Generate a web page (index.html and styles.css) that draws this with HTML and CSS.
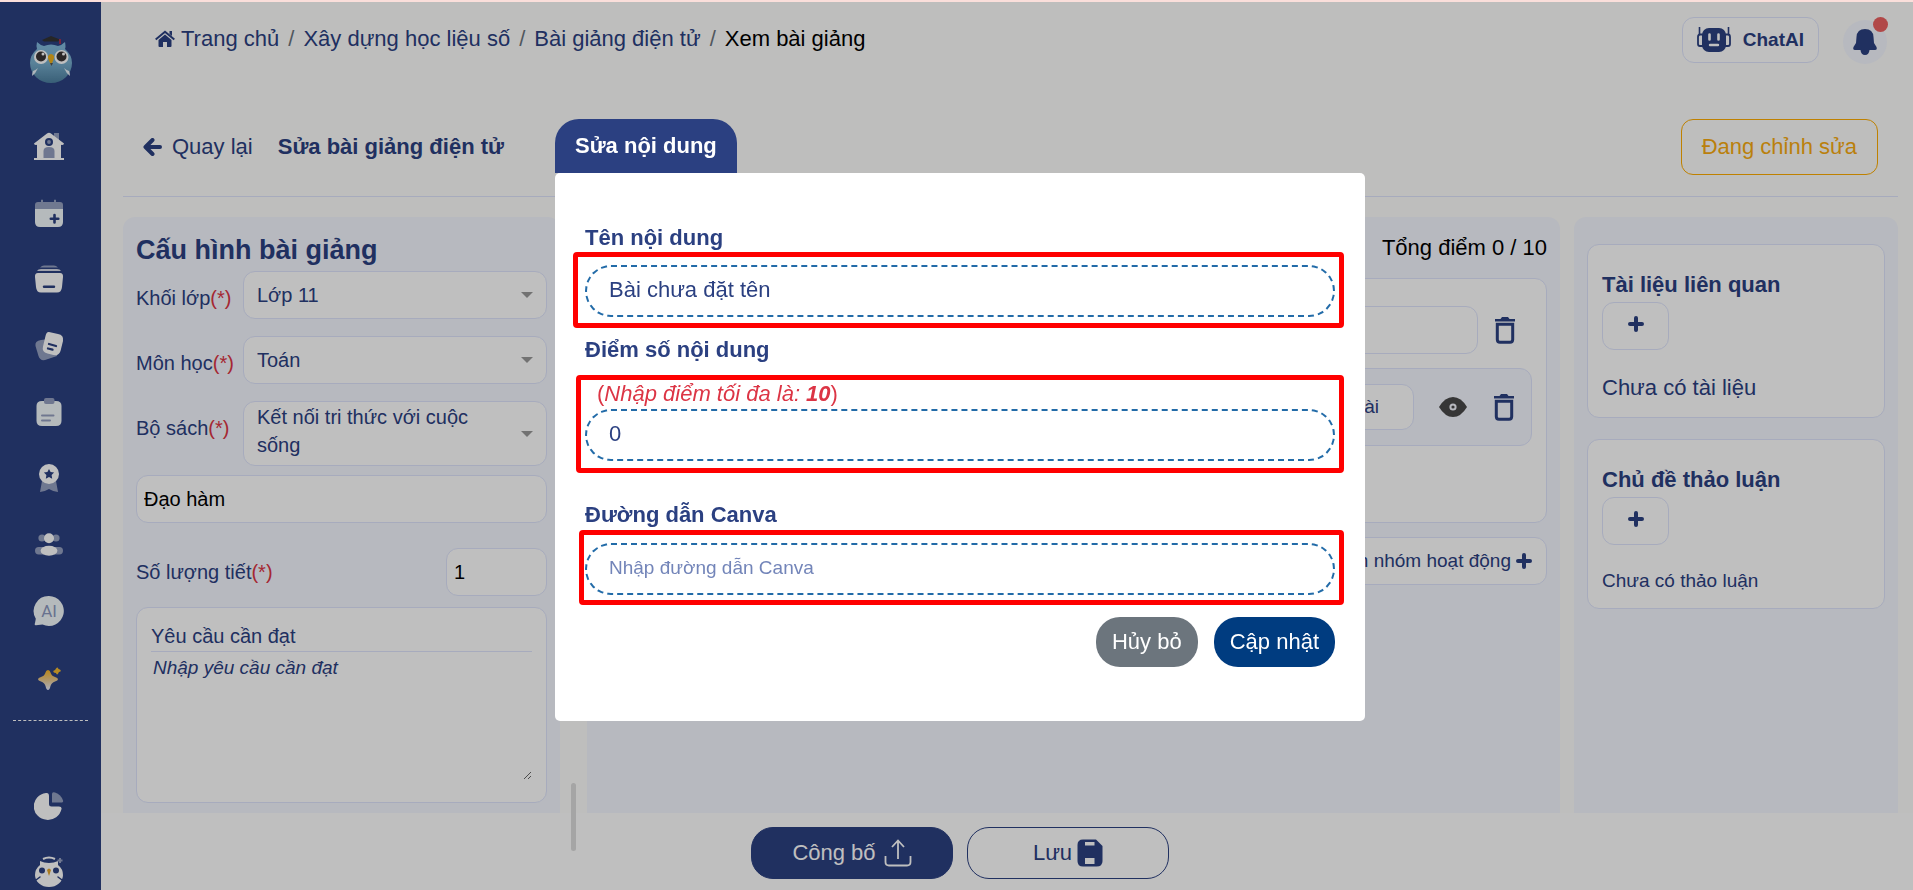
FILE: index.html
```html
<!DOCTYPE html>
<html lang="vi">
<head>
<meta charset="utf-8">
<meta name="viewport" content="width=device-width, initial-scale=1">
<title>Sửa bài giảng điện tử</title>
<link rel="stylesheet" href="styles.css">
</head>
<body>
<svg class="sprite" aria-hidden="true">
  <symbol id="trash" viewBox="0 0 22 28"><path d="M1 3h5.500l1.500-2h6l1.500 2H21v2.500H1z" fill="currentColor"/><path d="M3.300 8.300h15.400v15.200q0 2.700-2.700 2.700H6q-2.700 0-2.700-2.700z" fill="none" stroke="currentColor" stroke-width="3"/></symbol>
  <symbol id="plus" viewBox="0 0 16 16"><path d="M8 2v12M2 8h12" stroke="currentColor" stroke-width="4" stroke-linecap="round"/></symbol>
</svg>
<div class="app">
  <nav class="sidebar" aria-label="Điều hướng">
    <a class="logo" href="#" aria-label="Trang chính">
      <svg width="42" height="48" viewBox="0 0 42 48">
        <defs><linearGradient id="owl" x1="0" y1="0" x2="0" y2="1"><stop offset="0" stop-color="#83bbdf"/><stop offset=".5" stop-color="#78aecd"/><stop offset="1" stop-color="#4c7f9f"/></linearGradient></defs>
        <path d="M7 6q3 3 7 4 7-3 14 0 4-1 7-4 1 5 0 7 7 6 7 14a21 20 0 0 1-42 0q0-8 7-14-1-3 0-7z" fill="url(#owl)"/>
        <path d="M12 4l9-4 9 3.500-2 2H14z" fill="#333"/><path d="M30 3v5" stroke="#a03050" stroke-width="2"/>
        <circle cx="11" cy="21" r="7" fill="#fff"/><circle cx="31.500" cy="21" r="7" fill="#fff"/>
        <circle cx="11" cy="20.500" r="5" fill="#3a3434"/><circle cx="31.500" cy="20.500" r="5" fill="#3a3434"/>
        <circle cx="13" cy="18" r="1.500" fill="#fff"/><circle cx="33.500" cy="18" r="1.500" fill="#fff"/>
        <path d="M21 18q5 1 2 7l-2 4-2-4q-3-6 2-7z" fill="#eeb01b"/><path d="M20 27h3l-1.500 3z" fill="#555"/>
        <path d="M8 32q-2 5-6 8 0-3 1-5 3-1 5-3zM34 32q2 5 6 8 0-3-1-5-3-1-5-3z" fill="#e8f2fa"/>
      </svg>
    </a>
    <div class="nav-list">
      <a href="#" aria-label="Trang chủ"><svg width="32" height="32" viewBox="0 0 32 32"><path class="dim" d="M21 3h5v8h-5z"/><path d="M14 3.500q2-1.500 4 0L31 13.500q0 2-3 1.300V28h3v2H1v-2h3V14.800q-3 .7-3-1.300z"/><circle cx="16" cy="12" r="4" class="ink"/><circle cx="16" cy="12" r="1.900" class="soft"/><path class="soft" d="M10.500 28v-7q0-4 5.500-4t5.500 4v7z"/></svg></a>
      <a href="#" aria-label="Lịch"><svg width="30" height="30" viewBox="0 0 30 30"><path class="dim" d="M1 11V7q0-3 3-3h3V2q1-1 2 0v2h11V2q1-1 2 0v2h4q3 0 3 3v4z"/><path class="tint" d="M1 11h28v13q0 5-5 5H6q-5 0-5-5z"/><path class="line" stroke-width="2.600" d="M20.500 17v7.500M16.800 20.700h7.500"/></svg></a>
      <a href="#" aria-label="Kho học liệu"><svg width="30" height="30" viewBox="0 0 30 30"><path class="dim" d="M6 3.500Q8 1.500 10 1.500h10q2 0 4 2z"/><path d="M3 7q1-2 4-2h16q3 0 4 2z" opacity=".8"/><path d="M4 9h22q3.300 0 3 4l-1 10q-.5 5.500-5 5.500H7Q2.500 28.500 2 23L1 13q-.3-4 3-4z"/><path class="line" stroke-width="2.400" d="M10 22.800h10"/></svg></a>
      <a href="#" aria-label="Bài giảng"><svg width="30" height="30" viewBox="0 0 30 30"><path class="dim" d="M7 9l17-2-1 18-12 4q-5 1-6.500-4L1.500 15Q.5 10 7 9z"/><path d="M15 1l9 2q6 1 5 7l-2.500 10q-1.500 5-7 4l-6-1.500q-6-1.500-4.500-7L11.500 5Q12.500.5 15 1z"/><path class="line" stroke-width="2.300" d="M15 13l7 2M14 17.500l4.500 1.200"/></svg></a>
      <a href="#" aria-label="Bài kiểm tra"><svg width="30" height="30" viewBox="0 0 30 30"><path class="tint" d="M8 4h14q5.500 0 5.500 5v15q0 5-5.500 5H8q-5.500 0-5.500-5V9Q2.500 4 8 4z"/><rect class="soft" x="10" y="1" width="10.500" height="6" rx="2"/><path d="M8 18.500h11.500M8 23.500h8" fill="none" stroke="#959fc0" stroke-width="2" stroke-linecap="round"/></svg></a>
      <a href="#" aria-label="Thành tích"><svg width="30" height="30" viewBox="0 0 30 30"><path class="dim" d="M8 18h14l2 11q-4 0-9-3-5 3-9 3z"/><circle cx="15" cy="11" r="10"/><path class="ink" d="M15 6l1.600 3 3.500.6-2.500 2.500.6 3.600-3.200-1.600-3.200 1.600.6-3.600L9.900 9.600l3.500-.6z"/></svg></a>
      <a href="#" aria-label="Lớp học"><svg width="30" height="30" viewBox="0 0 30 30"><g class="dim"><circle cx="8" cy="8" r="3.600"/><circle cx="22" cy="8" r="3.600"/><rect x="1" y="17" width="12" height="7.500" rx="3.700"/><rect x="17" y="17" width="12" height="7.500" rx="3.700"/></g><circle cx="15" cy="8.300" r="5"/><ellipse cx="15" cy="20.800" rx="8.400" ry="5"/></svg></a>
      <a href="#" aria-label="AI"><svg width="32" height="32" viewBox="0 0 32 32"><path class="tint" d="M16 1a15 15 0 1 1-6.500 28.600L3 30.300Q1 30.500 2 28l.8-4.300A15 15 0 0 1 16 1z"/><text x="16" y="22" text-anchor="middle" class="ai">AI</text></svg></a>
      <a href="#" aria-label="Công cụ"><svg width="30" height="30" viewBox="0 0 30 30"><defs><linearGradient id="spark" x1="0" y1="0" x2="0" y2="1"><stop offset="0" stop-color="#f8b624"/><stop offset=".5" stop-color="#eac98d"/><stop offset="1" stop-color="#e5eaff"/></linearGradient></defs><path fill="url(#spark)" d="M14 7q2 0 2.500 2.500 1 3.500 4.500 4.500 3 1 3 2.200T21 18.500q-3.500 1-4.500 4.500-.8 4-2.500 4t-2.500-4q-1-3.500-4.500-4.500-3-1-3-2.300T7 14q3.500-1 4.500-4.500Q12 7 14 7z"/><path d="M23 4.500q1-.5 1.500 1.500 3 .7 2 2.500-2 .2-2.300 2-1.500 2-2.200-.5-3.500-.5-2.500-2.200 2-.3 2.300-2z" fill="#f3b92f"/></svg></a>
    </div>
    <div class="nav-rest">
      <a href="#" aria-label="Thống kê"><svg width="30" height="30" viewBox="0 0 30 30"><path class="dim" d="M18 11.500V3q0-2.500 3-1.500 6 2 8 8 .6 2-2 2z"/><path d="M15 5v8q0 2.500 2.500 2.500H25q3 0 2.500 2.500A14 13.500 0 1 1 12 2q3-.5 3 3z"/></svg></a>
      <a href="#" aria-label="Trợ lý cú"><svg width="30" height="32" viewBox="0 0 30 32"><path d="M6 5q4 2 9 2t9-2v4q5 4 5 10a14 12 0 0 1-28 0q0-6 5-10z"/><path d="M9 3q6-3 12 0" fill="none" stroke="#fff" stroke-width="2"/><circle class="ink" cx="8" cy="14.500" r="3"/><circle class="ink" cx="22" cy="14.500" r="3"/><path d="M13 14q2-3 4 0l-2 6z" fill="#e3a52b"/><path d="M26 2v5M23.500 4.500h5" stroke="#959fc0" stroke-width="2"/><path class="line" stroke-width="1.500" d="M2 24l4-3M28 24l-4-3"/></svg></a>
    </div>
  </nav>

  <div class="main">
    <header class="topbar">
      <ol class="crumbs">
        <li><a href="#"><svg width="20" height="18" viewBox="0 0 20 18"><path fill="currentColor" d="M10 4.500l6.500 5.500v6q0 1-1 1H12v-5H8v5H4.500q-1 0-1-1v-6z"/><path fill="none" stroke="currentColor" stroke-width="2" d="M.7 9.500L10 1.700l9.300 7.800"/><path fill="currentColor" d="M14.500 1H17v5l-2.500-2z"/></svg>Trang chủ</a></li>
        <li><a href="#">Xây dựng học liệu số</a></li>
        <li><a href="#">Bài giảng điện tử</a></li>
        <li aria-current="page">Xem bài giảng</li>
      </ol>
      <button class="chat" type="button"><svg width="34" height="26" viewBox="0 0 34 26"><rect x="5" y="1" width="24" height="24" rx="7" fill="currentColor"/><path d="M2.500 0v8M31.500 0v8" stroke="currentColor" stroke-width="1.600"/><path d="M6 7.500H3q-2 0-2 2.500v7q0 2 2 2h3M28 7.500h3q2 0 2 2.500v7q0 2-2 2h-3" fill="none" stroke="currentColor" stroke-width="1.800"/><path d="M12.500 7.500v5M21.500 7.500v5" stroke="#fff" stroke-width="2.600" stroke-linecap="round"/><path d="M13 18h8" stroke="#fff" stroke-width="2.400" stroke-linecap="round"/></svg>ChatAI</button>
      <button class="bell" type="button" aria-label="Thông báo"><svg width="26" height="28" viewBox="0 0 26 28"><path fill="currentColor" d="M13 1q8 0 8.500 8l.5 6 2.500 4q1 3-1.500 3h-5.500q-.5 5-4.500 5t-4.500-5H3q-2.500 0-1.500-3L4 15l.5-6Q5 1 13 1z"/></svg><span class="dot"></span></button>
    </header>

    <div class="titlebar">
      <a class="back" href="#"><svg width="19" height="18" viewBox="0 0 19 18"><path d="M9.500 2L2.500 9l7 7M3 9h14" fill="none" stroke="currentColor" stroke-width="4" stroke-linecap="round" stroke-linejoin="round"/></svg>Quay lại</a>
      <h1>Sửa bài giảng điện tử</h1>
      <button class="status" type="button">Đang chỉnh sửa</button>
    </div>

    <div class="workspace">
      <section class="panel config">
        <h2>Cấu hình bài giảng</h2>
        <div class="row"><label for="grade">Khối lớp<em>(*)</em></label><div class="pick"><select id="grade"><option>Lớp 11</option></select></div></div>
        <div class="row"><label for="subject">Môn học<em>(*)</em></label><div class="pick"><select id="subject"><option>Toán</option></select></div></div>
        <div class="row last"><label for="book">Bộ sách<em>(*)</em></label><div class="pick"><button id="book" type="button" aria-haspopup="listbox">Kết nối tri thức với cuộc sống</button></div></div>
        <input class="box" type="text" value="Đạo hàm" aria-label="Tên bài giảng">
        <div class="count"><label for="periods">Số lượng tiết<em>(*)</em></label><input class="box" id="periods" type="text" inputmode="numeric" value="1"></div>
        <div class="goal"><label for="goal">Yêu cầu cần đạt</label><textarea id="goal" placeholder="Nhập yêu cầu cần đạt"></textarea></div>
      </section>

      <section class="panel content">
        <p class="total">Tổng điểm 0 / 10</p>
        <div class="group">
          <div class="group-head"><input class="box" type="text" aria-label="Tên nhóm hoạt động"><button class="icon" type="button" aria-label="Xóa nhóm"><svg width="22" height="28"><use href="#trash"/></svg></button></div>
          <div class="lesson">
            <button class="edit" type="button">Sửa bài</button>
            <button class="icon eye" type="button" aria-label="Xem"><svg width="28" height="22" viewBox="0 0 28 22"><path fill="#484848" d="M0 11Q6 1 14 1t14 10q-6 10-14 10T0 11z"/><circle cx="14" cy="11" r="2.600" fill="none" stroke="#f5f6fe" stroke-width="2"/></svg></button>
            <button class="icon" type="button" aria-label="Xóa bài"><svg width="22" height="28"><use href="#trash"/></svg></button>
          </div>
        </div>
        <button class="add-group" type="button">Thêm nhóm hoạt động<svg width="16" height="16"><use href="#plus"/></svg></button>
      </section>

      <aside class="panel related">
        <section class="card"><h3>Tài liệu liên quan</h3><button class="add" type="button" aria-label="Thêm tài liệu"><svg width="16" height="16"><use href="#plus"/></svg></button><p>Chưa có tài liệu</p></section>
        <section class="card"><h3>Chủ đề thảo luận</h3><button class="add" type="button" aria-label="Thêm thảo luận"><svg width="16" height="16"><use href="#plus"/></svg></button><p class="small">Chưa có thảo luận</p></section>
      </aside>
      <span class="thumb"></span>
    </div>

    <footer class="actions">
      <button class="publish" type="button">Công bố<svg width="28" height="28" viewBox="0 0 28 28"><path d="M14 20V2M8 8l6-6.500L20 8M1.500 17v6q0 3.500 3.500 3.500h18q3.500 0 3.500-3.500v-6" fill="none" stroke="currentColor" stroke-width="1.800"/></svg></button>
      <button class="save" type="button">Lưu<svg width="26" height="28" viewBox="0 0 26 28"><path fill="currentColor" d="M6 .5h13L25.500 7v15q0 5.500-6 5.500H6Q.5 27.500.5 22V6Q.5.5 6 .5z"/><path d="M8 3h9.500v3.500H8zM8 19h9.500v6H8z" fill="#fff"/></svg></button>
    </footer>
  </div>
</div>

<div class="layer">
  <div class="modal" role="dialog" aria-modal="true" aria-labelledby="dlg">
    <h2 class="tab" id="dlg">Sửa nội dung</h2>
    <form class="sheet">
      <label for="name">Tên nội dung</label>
      <div class="field name"><input id="name" type="text" value="Bài chưa đặt tên"><span class="mark"></span></div>
      <label for="score">Điểm số nội dung</label>
      <div class="field score"><p>(<i>Nhập điểm tối đa là: <b>10</b></i>)</p><input id="score" type="text" inputmode="decimal" value="0"><span class="mark"></span></div>
      <label for="canva">Đường dẫn Canva</label>
      <div class="field canva"><input id="canva" type="text" placeholder="Nhập đường dẫn Canva"><span class="mark"></span></div>
      <div class="buttons"><button class="cancel" type="button">Hủy bỏ</button><button class="ok" type="button">Cập nhật</button></div>
    </form>
  </div>
</div>
</body>
</html>
```

FILE: styles.css
```css
:root {
  --blue: #2b4081;
  --line: #dfe5fd;
  --panel: #f5f7ff;
}
* { box-sizing: border-box; }
body {
  margin: 0;
  height: 100vh;
  overflow: hidden;
  border-top: 2px solid #fbdfdb;
  background: #fff;
  color: var(--blue);
  font: 22px/28px "Liberation Sans", Arial, sans-serif;
}
h1, h2, h3, p, ol { margin: 0; padding: 0; }
button, input, select, textarea { font: inherit; color: inherit; margin: 0; }
button { background: none; border: 0; padding: 0; cursor: pointer; }
a { color: inherit; text-decoration: none; }
em { color: #dc3545; font-style: normal; }
svg { display: block; flex: none; }
.sprite { position: absolute; width: 0; height: 0; }

.app { display: flex; height: 100%; }

/* Sidebar */
.sidebar {
  width: 101px;
  flex: none;
  overflow: hidden;
  background: var(--blue);
}
.sidebar svg { fill: #fff; }
.sidebar .dim { opacity: .5; }
.sidebar .soft { fill: #959fc0; }
.sidebar .ink { fill: var(--blue); }
.sidebar .tint { fill: #f2f8fb; }
.sidebar .line { fill: none; stroke: var(--blue); stroke-linecap: round; }
.sidebar .ai { font: 17px Roboto, sans-serif; fill: #8b99bf; }
.logo { display: flex; justify-content: center; height: 111px; padding-top: 34px; }
.nav-list {
  display: grid;
  grid-auto-rows: 1fr;
  height: 598px;
}
.nav-list a, .nav-rest a {
  display: flex;
  align-items: center;
  justify-content: center;
  padding-right: 4px;
}
.nav-rest { margin: 9px 13px 0; border-top: 1px dashed #fff; padding-top: 52px; }
.nav-rest a { height: 66px; }

/* Page header */
.main { flex: 1; min-width: 0; display: flex; flex-direction: column; background: #fefefc; }
.topbar { display: flex; align-items: flex-start; padding: 15px 26px 0 54px; height: 94px; }
.crumbs { display: flex; list-style: none; flex: 1; padding-top: 8px; }
.crumbs a { display: flex; align-items: center; gap: 6px; }
.crumbs li { display: flex; }
.crumbs li + li::before { content: "/"; margin: 0 9px; color: #6c757d; }
.crumbs [aria-current] { color: #000; }
.chat {
  display: flex;
  align-items: center;
  gap: 12px;
  height: 46px;
  padding: 0 14px;
  border: 1px solid var(--line);
  border-radius: 12px;
  font-size: 19px;
  font-weight: bold;
  background: #fff;
}
.bell {
  position: relative;
  display: grid;
  place-items: center;
  width: 44px;
  height: 44px;
  margin: 3px 0 0 24px;
  border-radius: 50%;
  background: var(--panel);
}
.dot { position: absolute; top: -3px; right: -1px; width: 15px; height: 15px; border-radius: 50%; background: #ec6160; }
.titlebar {
  display: flex;
  align-items: flex-start;
  gap: 25px;
  height: 101px;
  margin: 0 15px 20px 22px;
  padding: 23px 20px 0;
  border-bottom: 1px solid var(--line);
}
.back, h1 { display: flex; align-items: center; gap: 10px; height: 56px; font-size: 22px; }
.status {
  margin-left: auto;
  height: 56px;
  padding: 0 20px;
  border: 1px solid #ffac00;
  border-radius: 12px;
  color: #f9ab10;
}

/* Workspace */
.workspace {
  position: relative;
  flex: 1;
  min-height: 0;
  display: grid;
  grid-template-columns: 437px 1fr 324px;
  padding: 0 15px 0 22px;
}
.panel { background: var(--panel); border-radius: 12px 12px 0 0; }
.content { margin: 0 14px 0 27px; }
.thumb { position: absolute; left: 470px; bottom: -38px; width: 5px; height: 68px; border-radius: 3px; background: #dcdcdc; }
.box {
  height: 48px;
  min-width: 0;
  padding: 0 7px;
  border: 1px solid var(--line);
  border-radius: 12px;
  background: #fff;
}
.config { padding: 18px 13px 10px; font-size: 20px; display: flex; flex-direction: column; }
.config h2 { font-size: 27px; line-height: 30px; margin-bottom: 6px; }
.config .box { color: #000; flex: none; }
.row { display: grid; grid-template-columns: 107px 1fr; align-items: center; margin-bottom: 17px; white-space: nowrap; }
.row label { padding-top: 6px; }
.row.last { margin-bottom: 9px; }
.row.last label { padding: 0 0 12px; }
.pick { position: relative; }
.pick::after {
  content: "";
  position: absolute;
  right: 14px;
  top: calc(50% - 3px);
  border: 6px solid transparent;
  border-top-color: #999;
  border-bottom: 0;
  pointer-events: none;
}
.pick select, .pick button {
  display: block;
  width: 100%;
  height: 48px;
  padding: 0 40px 0 13px;
  border: 1px solid var(--line);
  border-radius: 12px;
  background: #fff;
  appearance: none;
}
.pick button { height: auto; min-height: 65px; padding: 1px 60px 6px 13px; text-align: left; white-space: normal; }
.count { display: flex; align-items: center; justify-content: space-between; margin: 25px 0 11px; }
.count .box { width: 101px; }
.goal {
  display: flex;
  flex-direction: column;
  flex: 1;
  padding: 14px 14px 22px;
  border: 1px solid var(--line);
  border-radius: 12px;
  background: #fff;
}
.goal label { padding-bottom: 1px; border-bottom: 1px solid var(--line); }
.goal textarea {
  flex: 1;
  width: 100%;
  padding: 2px;
  border: 0;
  background: none;
  font-size: 19px;
  font-style: italic;
  resize: vertical;
}
.goal textarea::placeholder { color: var(--blue); opacity: 1; }

.content { padding: 17px 13px; }
.total { color: #000; text-align: right; }
.group {
  display: flex;
  flex-direction: column;
  gap: 14px;
  min-height: 245px;
  margin: 16px 0 14px;
  padding: 27px 14px;
  border: 1px solid var(--line);
  border-radius: 12px;
  background: #fff;
}
.group-head { display: flex; align-items: center; gap: 16px; padding-right: 16px; }
.group-head .box { flex: 1; }
.lesson {
  display: flex;
  align-items: center;
  justify-content: flex-end;
  height: 78px;
  padding: 0 16px;
  border: 1px solid var(--line);
  border-radius: 12px;
  background: var(--panel);
}
.edit { height: 46px; padding: 0 34px; border: 1px solid var(--line); border-radius: 12px; background: #fff; font-size: 19px; }
.eye { margin: 0 26px 0 25px; }
.add-group {
  display: flex;
  align-items: center;
  gap: 5px;
  height: 48px;
  margin-left: auto;
  padding: 0 14px;
  border: 1px solid var(--line);
  border-radius: 12px;
  background: #fff;
  font-size: 19px;
}

.related { padding: 27px 13px; }
.card {
  height: 174px;
  margin-bottom: 21px;
  padding: 26px 14px;
  border: 1px solid var(--line);
  border-radius: 12px;
  background: #fff;
}
.card:last-child { height: 170px; }
.card h3 { font-size: 22px; line-height: 28px; margin-bottom: 3px; }
.add { display: grid; place-items: center; width: 67px; height: 48px; padding-bottom: 4px; margin-bottom: 24px; border: 1px solid var(--line); border-radius: 12px; }
.small { font-size: 19px; line-height: 24px; }

.actions { display: flex; justify-content: center; gap: 14px; height: 77px; padding: 14px 94px 0 0; background: #fff; }
.actions button { display: flex; align-items: center; justify-content: center; width: 202px; height: 52px; border: 1px solid var(--blue); border-radius: 22px; }
.publish { gap: 8px; background: var(--blue); color: #fff; }
.save { gap: 5px; }

/* Dialog */
.layer {
  position: fixed;
  inset: 2px 0 0;
  display: flex;
  justify-content: center;
  align-items: flex-start;
  padding: 117px 0 0 7px;
  background: rgba(0, 0, 0, .25);
}
.modal { width: 810px; max-width: 100%; }
.tab {
  width: fit-content;
  height: 54px;
  padding: 13px 20px 0;
  border-radius: 24px 24px 0 0;
  background: var(--blue);
  color: #fff;
  font-size: 22px;
  line-height: 28px;
}
.sheet { padding: 51px 30px 54px; border-radius: 5px; background: #fff; }
.sheet > label { display: block; font-weight: bold; }
.field { position: relative; }
.field input {
  display: block;
  width: 100%;
  height: 52px;
  padding: 0 22px 2px;
  border: 2px dashed #226ba8;
  border-radius: 26px;
  background: none;
  outline: 0;
}
.field p { color: #dc3545; padding-left: 12px; line-height: 31px; }
.name { margin: 13px 0 19px; }
.score { margin: 14px 0 40px; }
.canva { margin: 14px 0 22px; }
.canva input { font-size: 19px; }
.canva input::placeholder { color: #7385b9; opacity: 1; }
.mark { position: absolute; border: 5px solid #f00; border-radius: 4px; pointer-events: none; inset: -13px -9px -11px -12px; }
.score .mark { inset: -3px -9px -12px; }
.canva .mark { left: -6px; bottom: -10px; }
.buttons { display: flex; justify-content: flex-end; gap: 16px; }
.buttons button { height: 50px; padding: 0 16px; border-radius: 24px; color: #fff; }
.cancel { background: #6c757d; }
.ok { background: #003c80; }
```
